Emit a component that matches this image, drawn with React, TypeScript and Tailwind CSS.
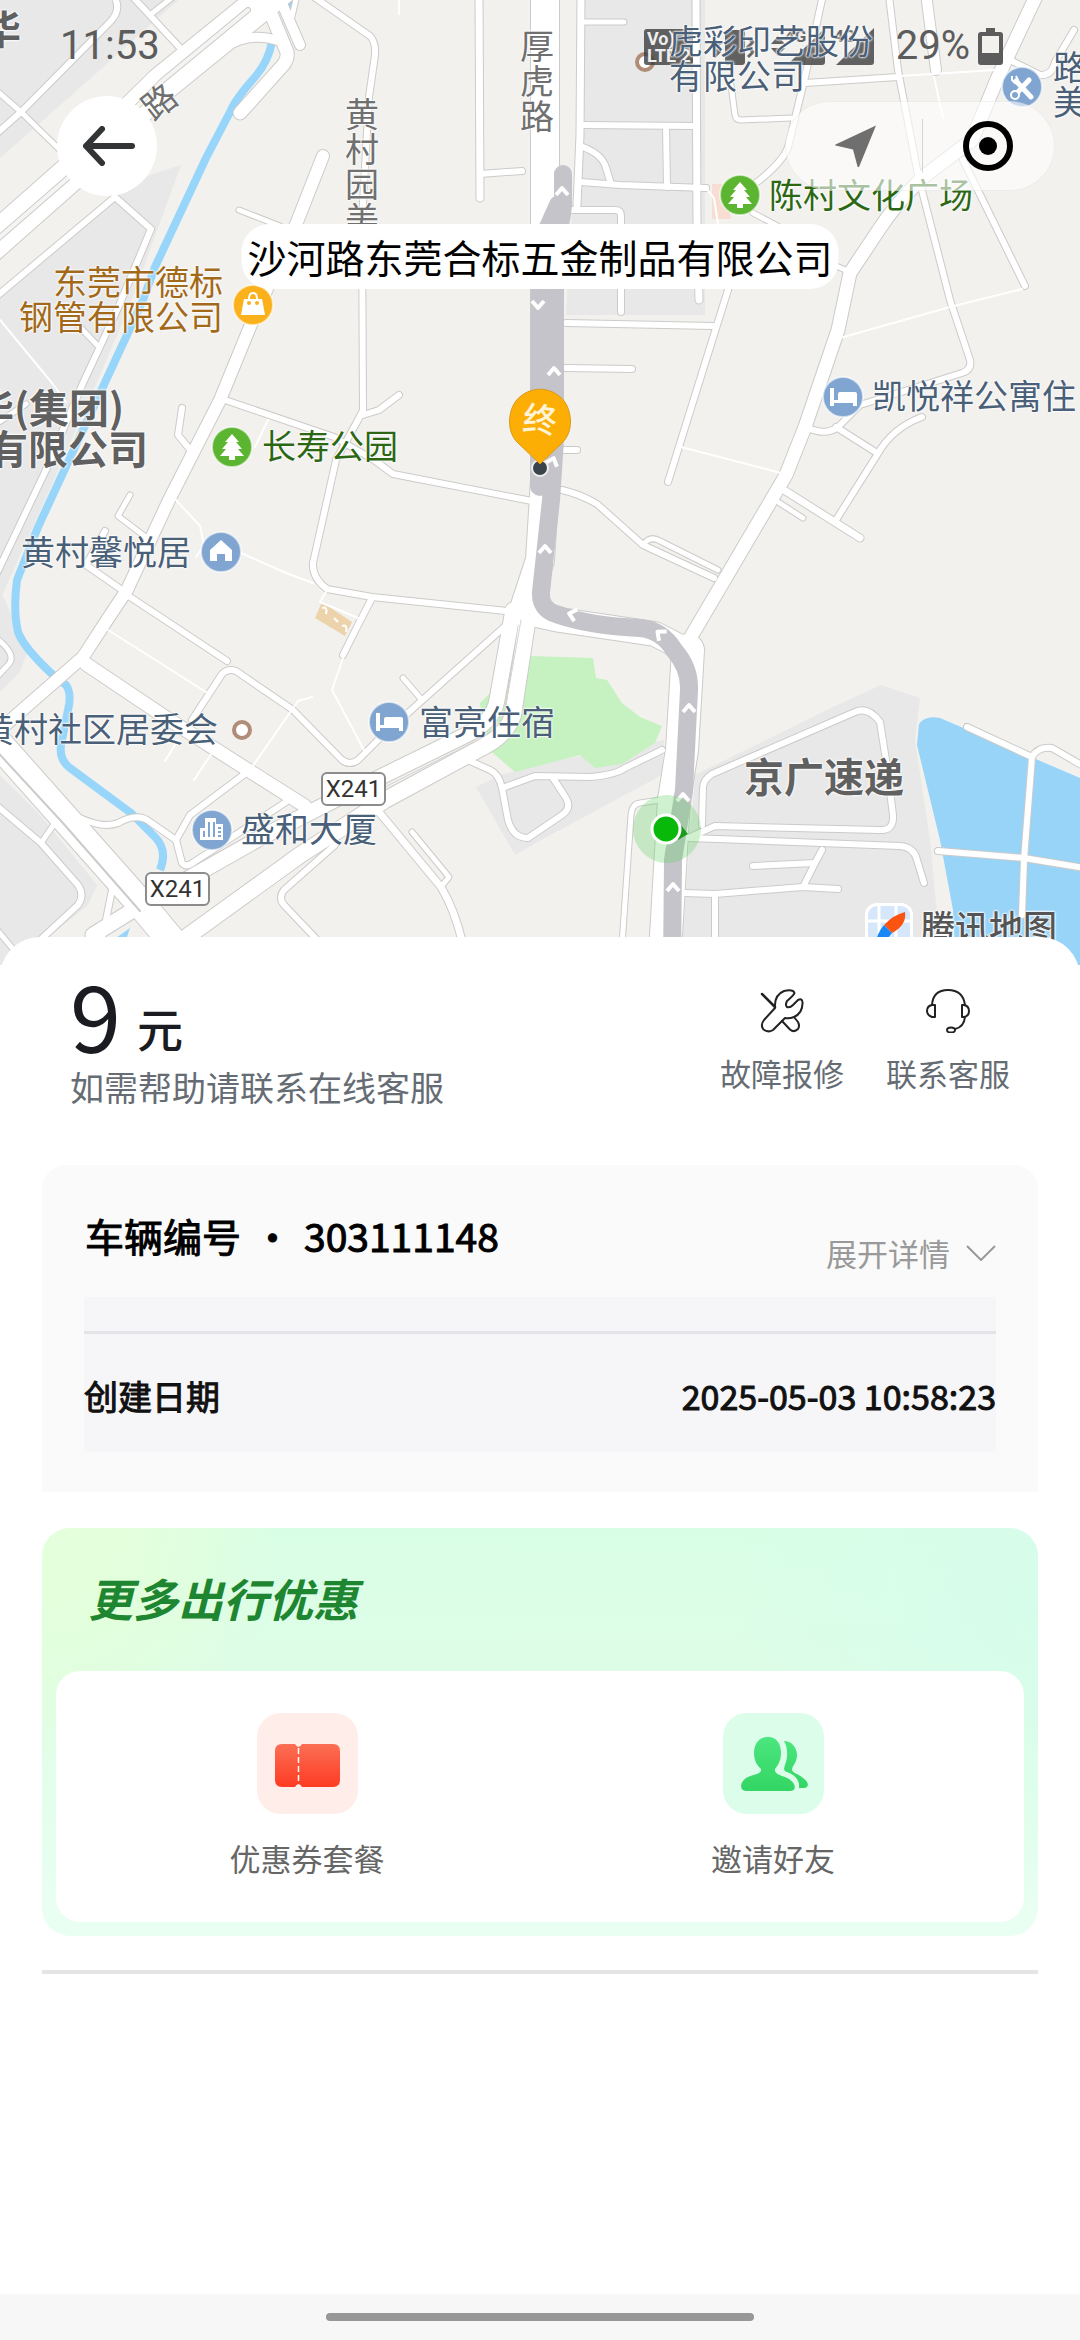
import type { ReactNode } from 'react';
import clsx from 'clsx';

// [width, path]
const ROADS: [number, string][] = [
  [34, 'M290 -20 L162 84 L69 175 L0 236 L-20 254'],
  [9, 'M224 48 Q250 30 282 42'],
  [13, 'M262 -8 L287 52 Q288 58 284 64 L240 113'],
  [10, 'M277 -8 L300 45'],
  [5, 'M297 -5 L290 25'],
  [6, 'M114 -4 Q122 10 110 22 L21 112 L-5 135'],
  [6, 'M132 -4 L182 50'],
  [5, 'M174 -4 L150 15'],
  [5, 'M-3 91 L21 112 L60 150'],
  [6, 'M-3 296 L115 197 L151 229 L118 308 L83 383 L45 472 L-4 575'],
  [5, 'M78 325 L97 345'],
  [5, 'M-4 424 L26 404'],
  [12, 'M323 156 L297 222 L252 322 L220 400 L169 500 L127 590 L107 620 L83 657 L20 712 L-5 734'],
  [5, 'M239 210 L280 226'],
  [6, 'M314 -3 L370 36 Q376 42 375 55 L369 97 L362 220 L363 410 L358 420 L336 460 L313 563 Q312 578 327 589 L372 597 L516 612'],
  [6, 'M399 395 L379 410 L363 415'],
  [6, 'M225 400 L334 437 L374 460 L393 474 L537 502'],
  [7, 'M479 -4 L480 198'],
  [6, 'M480 174 L522 171'],
  [28, 'M545 -10 L545 480 L540 560 L523 612'],
  [15, 'M513 610 L497 700 Q493 722 466 735 L350 792 L260 838 L138 907 L93 935'],
  [16, 'M529 610 L513 715 Q507 735 481 748 L385 800 L300 855 L170 949'],
  [28, 'M-10 734 L62 815 L140 903 L175 945'],
  [13, 'M86 664 L165 717 L248 770 L305 806'],
  [6, 'M127 595 L165 620 L227 661'],
  [6, 'M105 531 L86 565 L122 590'],
  [5, 'M130 495 L118 516 L147 538'],
  [6, 'M182 408 L178 435 L192 452'],
  [6, 'M372 598 L358 625 L343 655'],
  [6, 'M192 720 L222 674 Q228 668 236 671 L293 710 L342 760 Q350 766 358 760 L380 738 L512 620'],
  [5, 'M403 678 L422 700'],
  [6, 'M246 773 L190 815 L176 840 L182 863 Q186 868 194 862 L286 802'],
  [6, 'M68 812 Q100 830 118 823 Q138 812 150 822 L176 840'],
  [6, 'M-4 805 L41 843 L78 885 Q85 895 78 905 L38 942'],
  [5, 'M57 820 L41 843'],
  [5, 'M-2 931 L18 955'],
  [5, 'M-4 638 Q18 655 8 665 L-4 678'],
  [6, 'M113 885 L103 935'],
  [6, 'M335 845 L284 890 Q278 898 284 905 L322 945'],
  [7, 'M379 812 L441 887 Q455 910 463 945'],
  [5, 'M412 832 L449 877 L441 887'],
  [6, 'M461 757 L490 770 Q499 774 502 788 L508 820 Q513 838 528 838 L562 815 Q572 808 566 798 L553 778'],
  [6, 'M505 787 L535 776 L590 777 Q615 775 625 768 L662 750'],
  [32, 'M688 650 L682 750 L674 800 L664 970'],
  [5, 'M660 800 L640 803 Q632 804 631 815 L622 945'],
  [13, 'M1038 -8 L998 77 L972 140 L922 178 Q895 205 880 228 L850 273 L838 330 L805 427 L786 475 L732 567 L692 635'],
  [24, 'M523 612 L560 620 L655 634 L690 652'],
  [7, 'M581 -4 L580 135 L577 205'],
  [5, 'M581 22 L624 22'],
  [7, 'M696 -4 L697 227 L699 300'],
  [6, 'M581 125 L696 126'],
  [6, 'M666 126 L667 187'],
  [6, 'M581 182 L620 185 L706 188'],
  [6, 'M583 147 Q603 155 606 168 L611 184'],
  [6, 'M571 210 L615 210 Q621 210 621 216 L621 312'],
  [6, 'M566 323 L713 326'],
  [6, 'M728 290 L717 325 L668 482'],
  [6, 'M566 368 L632 369'],
  [6, 'M562 450 L577 450'],
  [6, 'M823 -5 L805 77 L788 147 Q784 160 760 180 L745 190'],
  [5, 'M731 85 L735 115 Q736 120 741 120 L791 118'],
  [6, 'M805 83 L898 77'],
  [6, 'M889 -4 L898 70 L918 175 L950 300 L970 360 Q972 370 962 373 L860 405 L838 427 Q826 436 808 428'],
  [10, 'M926 -6 L936 70'],
  [6, 'M963 160 L1025 286'],
  [6, 'M1010 60 L1040 75 Q1052 76 1055 62 L1074 30'],
  [5, 'M753 213 L785 230'],
  [5, 'M836 266 L848 271'],
  [6, 'M836 427 L877 453'],
  [6, 'M922 417 Q892 428 877 455 L836 520'],
  [7, 'M784 490 L860 538'],
  [5, 'M778 502 L803 518'],
  [6, 'M562 490 Q580 494 597 504 L643 545 L714 578'],
  [5, 'M643 545 Q650 535 660 541 L718 570'],
  [6, 'M702 825 L703 788 Q703 780 712 774 L855 712 Q868 706 880 722 L886 760 L893 815 Q894 831 880 830 L715 826 L688 838'],
  [6, 'M690 838 L900 846 Q914 847 917 860 L924 883'],
  [6, 'M753 866 L815 863 L822 850'],
  [6, 'M815 863 L803 887'],
  [6, 'M685 893 L715 894 L803 887 L838 889'],
  [6, 'M715 894 L715 945'],
  [6, 'M967 727 L1032 757 L1024 860 L1022 915'],
  [6, 'M1032 757 Q1038 746 1052 748 L1090 770'],
  [6, 'M938 851 L1024 858 L1090 869'],
];

// unpaved tracks, no casing
const TRACKS = [
  'M399 0 V14',
  'M0 320 L52 383 L66 402',
  'M176 500 L200 526 L204 545 L196 557',
  'M241 553 L286 573 L313 583',
  'M268 420 L255 447',
  'M108 630 L206 692',
  'M344 655 L332 690 L365 752',
  'M326 592 L320 602 L358 618',
  'M312 697 L298 701 L250 770',
  'M178 740 L165 761',
  'M212 753 L194 780',
  'M900 76 L995 70',
  'M934 77 L943 118',
  'M1022 289 L950 307 L840 338',
  'M706 188 L714 198 L718 224',
  'M681 447 L781 473',
];

const LANES = [
  'M248 10 L162 81 L69 177 L0 237 L-20 255',
  'M-10 744 L62 822 L140 911',
  'M521 620 L505 710 Q501 728 474 742 L385 787',
];

const ROUTE =
  'M563 174 L563 205 Q562 222 555 240 L555 440 L551 500 L541 592 Q540 609 556 614 Q590 626 640 628 Q662 630 674 650 Q690 668 689 690 L684 790 L673 860 L672 970';

// x, y, rotation
const CHEVRONS = [
  [562, 190, 0],
  [538, 306, 180],
  [554, 370, 0],
  [553, 460, 20],
  [545, 548, 0],
  [571, 614, -75],
  [659, 633, -50],
  [689, 707, 0],
  [683, 796, 0],
  [673, 886, 0],
];

function MapCanvas() {
  return (
    <svg
      className="absolute inset-0 size-full"
      viewBox="0 0 1080 965"
      preserveAspectRatio="xMidYMin slice"
      aria-hidden="true"
    >
      <rect width="1080" height="965" fill="#f2f1ee" />
      <g fill="#e8e8e8">
        <path d="M0 0 H178 L100 70 L0 158Z" />
        <path d="M181 165 L150 175 L115 197 L0 298 V600 L45 500 L100 375 L128 310Z" />
        <path d="M0 590 L28 650 L20 672 L0 692Z" />
        <path d="M0 775 L40 815 L97 885 L88 905 L45 940 L0 965Z" />
        <path d="M585 0 H705 V315 H566 L572 210 L580 120Z" />
        <path d="M476 787 L515 855 L545 838 L662 775 L664 740 L560 760 L500 775Z" />
        <path d="M695 775 L833 707 L881 685 L920 698 L915 740 L930 840 L940 945 H682 L690 838Z" />
      </g>
      <path
        d="M530 656 L593 658 L596 678 L607 680 L622 703 L640 717 L662 726 L655 743 L622 764 L595 768 L580 755 L515 772 L486 747 L480 703 L492 691Z"
        fill="#c6f1c0"
      />
      <path
        d="M919 724 Q925 715 940 718 L968 730 L1080 778 V965 H956 L953 910 L940 840 L917 745Z"
        fill="#97d4f8"
      />
      <path d="M285 -2 L294 -2 L292 12Z" fill="#8ed3f9" />
      <path
        d="M272 42 Q268 62 255 77 Q236 98 230 112 L206 158 L155 267 L143 300 L127 335 L69 460 L38 527 L17 580 Q13 610 18 632 Q24 648 52 674 L66 685 Q71 692 69 705 L61 745 Q59 760 70 768 L131 813 L155 837 Q168 850 160 870"
        fill="none"
        stroke="#97d6fa"
        strokeWidth="8"
      />
      <path d="M116 938 L130 928 L126 940Z" fill="#97d6fa" />
      <path d="M322 602 L352 622 L345 636 L315 618Z" fill="#ecd3ab" />
      <path d="M322 608 Q328 606 326 614 M334 618 L338 622 M342 626 Q348 624 346 632" stroke="#fff" strokeWidth="2" fill="none" />
      <path d="M712 184 H726 L731 219 H712Z" fill="#f8ddd2" />

      <g fill="none" strokeLinecap="round" strokeLinejoin="round">
        {ROADS.map(([width, d]) => (
          <path key={d} d={d} stroke="#cccbc9" strokeWidth={width + 2} />
        ))}
        {TRACKS.map((d) => (
          <path key={d} d={d} stroke="#fff" strokeWidth={2} />
        ))}
        {ROADS.map(([width, d]) => (
          <path key={d} d={d} stroke="#fff" strokeWidth={width} />
        ))}
        <path d={LANES[0]} stroke="#cccbc9" strokeWidth="6" />
        <path d={LANES[0]} stroke="#f4f4f2" strokeWidth="4" />
        <path d={LANES[1]} stroke="#cccbc9" strokeWidth="2" />
        <path d={LANES[2]} stroke="#d4d3d1" strokeWidth="1" />
      </g>

      {/* Route */}
      <g fill="none" strokeLinejoin="round">
        <path d={ROUTE} stroke="#c5c4ca" strokeWidth="18" strokeLinecap="round" />
        <path d="M559 205 L541 245 L540 486" stroke="#c5c4ca" strokeWidth="20" strokeLinecap="round" />
        {CHEVRONS.map(([x, y, r]) => (
          <path
            key={`${x}-${y}`}
            d="M-6 5 L0 -2 L6 5"
            transform={`translate(${x} ${y}) rotate(${r})`}
            stroke="#fff"
            strokeWidth="4"
          />
        ))}
      </g>

      {/* Current position */}
      <circle cx="667" cy="829" r="34" fill="#5fcf5f" fillOpacity="0.3" />
      <path d="M678 840 L680 824 L688 834Z" fill="#1c9a1c" />
      <circle cx="666" cy="829" r="14" fill="#09b909" stroke="#fff" strokeWidth="3" />

      {/* Destination pin */}
      <circle cx="540" cy="468" r="8" fill="#3c444b" stroke="#eee" strokeWidth="2" />
      <path
        d="M540 464 L518 443 C504 430 509 404 521 396 C532 387 548 387 559 396 C571 404 576 430 562 443Z"
        fill="#fcae05"
        stroke="#d99a17"
        strokeWidth="1"
      />

      <Poi x={253} y={305} color="#fbb11c">
        <path d="M-9 -6 H9 L12 10 H-12Z" fill="#fff" />
        <path d="M-4 -6 Q-4 -12 0 -12 Q4 -12 4 -6" fill="none" stroke="#fff" strokeWidth="2" />
        <circle cx="-4" cy="-2" r="2" fill="#fbb11c" />
        <circle cx="4" cy="-2" r="2" fill="#fbb11c" />
      </Poi>
      <TreePoi x={740} y={195} />
      <TreePoi x={232} y={447} />
      <BedPoi x={843} y={397} />
      <BedPoi x={389} y={722} />
      <Poi x={221} y={552} color="#7fa5d0">
        <path d="M0 -12 L11 -2 V9 H4 V2 H-4 V9 H-11 V-2Z" fill="#fff" />
      </Poi>
      <Poi x={212} y={830} color="#7fa5d0">
        <path d="M-12 -2 H-7 V-12 H4 V-6 H11 V10 H-12Z" fill="#fff" />
        <path d="M-8 1 V7 M-3 -8 V7 M2 -8 V7 M6 -2 H9 M6 2 H9 M6 6 H9" stroke="#7fa5d0" strokeWidth="2" />
      </Poi>
      <Poi x={1022} y={87} color="#7fa5d0">
        <path d="M-6 -6 L9 10 M7 -7 L-5 6" stroke="#fff" strokeWidth="5" strokeLinecap="round" />
        <path d="M-10 -11 L-10 -7 L-7 -4 L-4 -7 L-6 -11" fill="none" stroke="#fff" strokeWidth="2" />
        <circle cx="-7" cy="8" r="4" fill="#7fa5d0" stroke="#fff" strokeWidth="2" />
      </Poi>
      <circle cx="645" cy="62" r="8" fill="#fff" stroke="#b08d78" strokeWidth="4" />
      <circle cx="242" cy="730" r="8" fill="#fff" stroke="#b08d78" strokeWidth="4" />
    </svg>
  );
}

function Poi({ x, y, color, children }: { x: number; y: number; color: string; children: ReactNode }) {
  return (
    <g transform={`translate(${x} ${y})`}>
      <circle r="20" fill={color} stroke="#fff" strokeOpacity="0.6" strokeWidth="2" />
      {children}
    </g>
  );
}

function TreePoi({ x, y }: { x: number; y: number }) {
  return (
    <Poi x={x} y={y} color="#5bb531">
      <path d="M0 -13 L7 -5 H4 L10 2 H6 L12 9 H3 V13 H-3 V9 H-12 L-6 2 H-10 L-4 -5 H-7Z" fill="#fff" />
    </Poi>
  );
}

function BedPoi({ x, y }: { x: number; y: number }) {
  return (
    <Poi x={x} y={y} color="#7fa5d0">
      <path d="M-13 -9 H-9 V3 H-5 V-3 Q-5 -5 -3 -5 H12 Q14 -5 14 -3 V9 H10 V6 H-9 V9 H-13Z" fill="#fff" />
    </Poi>
  );
}

const TONE = {
  gray: 'text-[#707070]',
  dark: 'text-[#606060]',
  blue: 'text-[#4a5f78]',
  green: 'text-[#2c6714]',
  brown: 'text-[#a3691a]',
};

type MapLabel = {
  text: string;
  x: number;
  y: number;
  tone: keyof typeof TONE;
  big?: boolean;
  className?: string;
};

const LABELS: MapLabel[] = [
  { text: '华', x: -19, y: 27, tone: 'dark', big: true },
  { text: '路', x: 141, y: 100, tone: 'gray', className: '-rotate-38' },
  { text: '黄\n村\n园\n美', x: 345, y: 165, tone: 'gray' },
  { text: '厚\n虎\n路', x: 520, y: 79, tone: 'gray' },
  { text: '虎彩印艺股份\n有限公司', x: 669, y: 57, tone: 'blue' },
  { text: '路\n美', x: 1053, y: 83, tone: 'blue' },
  { text: '陈村文化广场', x: 769, y: 193, tone: 'green' },
  { text: '东莞市德标\n钢管有限公司', x: 19, y: 298, tone: 'brown', className: 'text-right' },
  { text: '凯悦祥公寓住', x: 872, y: 394, tone: 'blue' },
  { text: '华(集团)', x: -26, y: 406, tone: 'dark', big: true },
  { text: '有限公司', x: -12, y: 447, tone: 'dark', big: true },
  { text: '长寿公园', x: 262, y: 444, tone: 'green' },
  { text: '黄村馨悦居', x: 21, y: 550, tone: 'blue' },
  { text: '黄村社区居委会', x: -20, y: 727, tone: 'blue' },
  { text: '富亮住宿', x: 419, y: 720, tone: 'blue' },
  { text: '京广速递', x: 744, y: 775, tone: 'dark', big: true },
  { text: '盛和大厦', x: 241, y: 827, tone: 'blue' },
];

const SHIELDS = [
  { x: 321, y: 772 },
  { x: 145, y: 872 },
];

function Labels() {
  return (
    <div className="absolute inset-0">
      {LABELS.map(({ text, x, y, tone, big, className }) => (
        <span
          key={text + x}
          className={clsx(
            'absolute -translate-y-1/2 whitespace-pre [text-shadow:0_0_2px_#fff,0_0_2px_#fff,0_0_3px_#fff]',
            big ? 'text-[40px] leading-10 font-bold' : 'text-[34px] leading-[35px]',
            TONE[tone],
            className,
          )}
          style={{ left: x, top: y }}
        >
          {text}
        </span>
      ))}
      {SHIELDS.map(({ x, y }) => (
        <span
          key={x}
          className="absolute flex h-[34px] w-[65px] items-center justify-center rounded-md border-2 border-[#8c8c8c] bg-white font-[Roboto,sans-serif] text-2xl leading-6 text-[#333]"
          style={{ left: x, top: y }}
        >
          X241
        </span>
      ))}
      <span className="absolute left-1/2 top-[398px] -translate-x-1/2 rotate-6 text-[34px] leading-10 font-medium text-[#fff3d8]">
        终
      </span>
      <div className="absolute left-1/2 top-56 flex h-[65px] -translate-x-1/2 items-center rounded-[28px] bg-white px-[6px] text-[39px] leading-none whitespace-nowrap text-black">
        沙河路东莞合标五金制品有限公司
      </div>
      <div className="absolute right-[23px] top-[903px] flex items-start gap-2">
        <svg className="size-[48px]" viewBox="0 0 48 48" aria-hidden="true">
          <rect width="48" height="48" rx="12" fill="#fff" />
          <rect x="3" y="3" width="42" height="42" rx="9" fill="#d6e6fb" />
          <path d="M14 3 V45 M31 3 V45 M3 18 H45" stroke="#fff" strokeWidth="3" />
          <path d="M40 9 Q42 22 27 30 L19 22 Q28 12 40 9Z" fill="#fb5410" />
          <path d="M19 22 L27 30 Q20 40 10 42 Q12 30 19 22Z" fill="#1687f5" />
        </svg>
        <span className="text-[34px] leading-[46px] font-medium text-[#555] [text-shadow:0_0_2px_#fff,0_0_2px_#fff,0_0_2px_#fff,0_0_3px_#fff]">
          腾讯地图
        </span>
      </div>
    </div>
  );
}

function StatusBar() {
  return (
    <div className="relative flex h-[92px] items-center justify-between pl-[60px] pr-[77px] font-[Roboto,sans-serif] text-[40px] leading-none text-[#5c5c5c]">
      <span>11:53</span>
      <div className="flex items-center gap-2">
        <svg className="h-[37px] w-[244px]" viewBox="0 0 244 37" aria-hidden="true">
          <g fill="#3c3c3c" fillOpacity="0.8">
            <rect x="0" y="1" width="49" height="36" rx="3" />
            <rect x="81" y="2" width="20" height="35" rx="3" />
            <path d="M127 16 L134 8 L141 16Z M127 20 L134 28 L141 20Z" />
            <path d="M181 0 V34 Q181 37 178 37 H143Z" />
            <path d="M230 0 V34 Q230 37 227 37 H192Z" />
          </g>
          <path d="M70 12 L75 16 L70 20 L75 24 L70 29" stroke="#666" strokeWidth="3" fill="none" />
          <path d="M104 10 L109 14 L104 19 L109 24 L104 29" stroke="#666" strokeWidth="3" fill="none" />
          <g fontFamily="Roboto, sans-serif" fontWeight="700" fontSize="18">
            <text x="3" y="17" fill="#eee">Vo)</text>
            <text x="3" y="34" fill="#eee">LTE 2</text>
            <text x="141" y="14" fontSize="17" fill="#666">4G</text>
            <text x="190" y="14" fontSize="17" fill="#666">4G</text>
          </g>
        </svg>
        <span>29%</span>
        <svg className="h-[37px] w-[25px]" viewBox="0 0 25 37" aria-hidden="true">
          <path
            d="M8 0 H17 V4 H22 Q25 4 25 7 V34 Q25 37 22 37 H3 Q0 37 0 34 V7 Q0 4 3 4 H8Z M4 8 V25 H21 V8Z"
            fill="#5c5c5c"
            fillRule="evenodd"
          />
        </svg>
      </div>
    </div>
  );
}

function NavBar() {
  return (
    <div className="relative flex items-center justify-between pt-1 pl-[57px] pr-[25px]">
      <button type="button" aria-label="返回" className="flex size-[100px] items-center justify-center rounded-full bg-white pl-1">
        <svg className="h-10 w-[54px]" viewBox="0 0 54 40" fill="none" stroke="#333436" strokeWidth="6" strokeLinecap="round" strokeLinejoin="round" aria-hidden="true">
          <path d="M4 20 H50 M20 3 L4 20 L20 37" />
        </svg>
      </button>
      <div className="flex h-[90px] w-[270px] items-center rounded-full border border-black/5 bg-white/60 pl-1">
        <button type="button" aria-label="定位" className="flex h-full flex-1 items-center justify-center">
          <svg className="size-[42px]" viewBox="0 0 42 42" fill="#6f6f6f" aria-hidden="true">
            <path d="M41 0.500 L24 42 Q23 43 22.500 41.500 L18 24.500 L0.500 20.500 Q-0.500 20 0.500 19.500 Z" />
          </svg>
        </button>
        <span className="h-[54px] w-px bg-black/15" />
        <button type="button" aria-label="关闭" className="flex h-full flex-1 items-center justify-center">
          <svg className="size-[50px]" viewBox="0 0 50 50" aria-hidden="true">
            <circle cx="25" cy="25" r="22" fill="none" stroke="#000" strokeWidth="6" />
            <circle cx="25" cy="25" r="9" />
          </svg>
        </button>
      </div>
    </div>
  );
}

function WrenchIcon() {
  return (
    <svg className="size-11" viewBox="0 0 44 44" fill="none" stroke="#222" strokeWidth="2" strokeLinecap="round" strokeLinejoin="round" aria-hidden="true">
      <path d="M15 19 Q14 6 24 2 Q33 0 34.500 4 Q34 6 27 12 Q25 16 27 18 Q30 19 33 16 L38 11 Q42 9 42.500 13 Q43 24 34 28 Q29 30 25 29 L13 41 Q8 44 3.500 40.500 Q0 36 4 31Z" />
      <path d="M2 5 L15 18" strokeWidth="2.500" />
      <path d="M22 32 L30 40.500 Q34 44 38 40 Q40 37 38 33 L34 28" />
    </svg>
  );
}

function HeadsetIcon() {
  return (
    <svg className="size-11" viewBox="0 0 44 44" fill="none" stroke="#222" strokeWidth="2" strokeLinejoin="round" aria-hidden="true">
      <path d="M6 16 Q7 1 22 1 Q37 1 39 16" />
      <path d="M9 16 V28 H6 Q1 26 1 22 Q1 17 6 16Z" />
      <path d="M36 16 V28 H38 Q43 27 43 22 Q43 17 38 16Z" />
      <path d="M39 28 Q38 38 29 40" />
      <ellipse cx="25" cy="41" rx="4" ry="2.500" />
    </svg>
  );
}

function CouponIcon() {
  return (
    <svg className="size-[101px]" viewBox="0 0 101 101" aria-hidden="true">
      <defs>
        <linearGradient id="coupon" x1="0" y1="0" x2="0" y2="1">
          <stop offset="0" stopColor="#fb6f55" />
          <stop offset="1" stopColor="#fd3b22" />
        </linearGradient>
      </defs>
      <rect width="101" height="101" rx="24" fill="#ffedea" />
      <path
        d="M25 31 H38 Q41.500 37 45 31 H76 Q83 31 83 38 V67 Q83 74 76 74 H45 Q41.500 68 38 74 H25 Q18 74 18 67 V38 Q18 31 25 31Z"
        fill="url(#coupon)"
      />
      <path d="M41.500 35 V71" stroke="#fff" strokeWidth="1.500" strokeDasharray="6 3" />
    </svg>
  );
}

function FriendsIcon() {
  return (
    <svg className="size-[101px]" viewBox="0 0 101 101" aria-hidden="true">
      <defs>
        <linearGradient id="friends" x1="0" y1="0" x2="0" y2="1">
          <stop offset="0" stopColor="#4be67f" />
          <stop offset="1" stopColor="#33d563" />
        </linearGradient>
      </defs>
      <rect width="101" height="101" rx="24" fill="#dbfde9" />
      <g fill="url(#friends)">
        <path d="M45 24 C54 24 58 31 58 40 C58 48 55 52 52 56 C51 62 60 62 66 66 C74 71 73 78 67 78 H23 C17 78 16 70 23 65 C30 61 39 62 38 56 C34 52 31 48 31 40 C31 31 36 24 45 24Z" />
        <path d="M61 28 C69 28 74 35 74 42 C74 49 70 52 69 56 C69 60 74 60 80 65 C87 70 86 75 80 75 H76 C77 67 72 62 64 59 C60 58 61 55 62 52 C65 44 65 35 61 28Z" />
      </g>
    </svg>
  );
}

const ACTIONS = [
  { label: '故障报修', icon: <WrenchIcon /> },
  { label: '联系客服', icon: <HeadsetIcon /> },
];

const OFFERS = [
  { label: '优惠券套餐', icon: <CouponIcon /> },
  { label: '邀请好友', icon: <FriendsIcon /> },
];

export default function App() {
  return (
    <div className="flex min-h-screen flex-col bg-white font-['Noto_Sans_CJK_SC','Noto_Sans',sans-serif]">
      <header className="relative h-[965px] overflow-hidden">
        <MapCanvas />
        <StatusBar />
        <Labels />
        <NavBar />
      </header>

      <main className="relative -mt-7 flex flex-1 flex-col rounded-t-[40px] bg-white px-[42px] pt-7">
        <section className="flex items-start justify-between pl-7 pr-7">
          <div className="text-[#1b1c21]">
            <p className="flex items-start gap-4">
              <span className="text-[92px] leading-[96px]">9</span>
              <span className="pt-[38px] text-[46px] leading-[48px] font-medium">元</span>
            </p>
            <p className="mt-2 text-[34px] leading-9 text-[#666c73]">如需帮助请联系在线客服</p>
          </div>
          <div className="flex gap-[42px] pt-6">
            {ACTIONS.map(({ label, icon }) => (
              <button key={label} type="button" className="flex flex-col items-center gap-5 text-[31px] leading-10 text-[#666c73]">
                {icon}
                {label}
              </button>
            ))}
          </div>
        </section>

        <section className="mt-[60px] rounded-t-3xl bg-[#fafafa] px-[42px] pt-[46px] pb-10">
          <div className="flex items-start justify-between">
            <h2 className="flex gap-3 pl-px text-[39px] leading-[48px] text-black [-webkit-text-stroke:1px_currentColor]">
              <span>车辆编号</span>
              <span>・</span>
              <span>303111148</span>
            </h2>
            <button type="button" className="mt-[22px] flex items-center gap-4 text-[31px] leading-10 text-[#999]">
              展开详情
              <svg className="h-4 w-[30px]" viewBox="0 0 30 16" fill="none" stroke="#999" strokeWidth="2" aria-hidden="true">
                <path d="M1 1 L15 15 L29 1" />
              </svg>
            </button>
          </div>
          <div className="mt-6 bg-[#f6f6f8] pt-[34px]">
            <div className="h-[3px] bg-[#e4e4e8]" />
            <dl className="flex h-[118px] items-center justify-between pt-1 text-[34px] text-[#111] [-webkit-text-stroke:1px_currentColor]">
              <dt>创建日期</dt>
              <dd>2025-05-03 10:58:23</dd>
            </dl>
          </div>
        </section>

        <section className="mt-9 rounded-[28px] bg-[radial-gradient(circle_at_0%_0%,#e4ffdb_0px,#e2ffdd_120px,transparent_240px),radial-gradient(circle_at_100%_20%,#d6fdeb_0px,transparent_300px),linear-gradient(to_bottom,#d9fee6,#dffde7_40%,#eafff3)] px-[14px] pb-[14px]">
          <h2 className="px-8 pt-[42px] pb-[45px] text-[45px] leading-[56px] font-bold italic text-[#1e8530]">更多出行优惠</h2>
          <div className="grid grid-cols-2 rounded-3xl bg-white px-[18px] pt-[42px] pb-11">
            {OFFERS.map(({ label, icon }) => (
              <button key={label} type="button" className="flex flex-col items-center gap-6 text-[31px] leading-10 text-[#666]">
                {icon}
                {label}
              </button>
            ))}
          </div>
        </section>

        <hr className="mt-[34px] border-t-4 border-[#e4e4e4]" />
      </main>

      <footer className="flex h-[46px] items-center justify-center bg-[#f7f7f7]">
        <span className="h-2 w-[428px] rounded-full bg-[#979797]" />
      </footer>
    </div>
  );
}
